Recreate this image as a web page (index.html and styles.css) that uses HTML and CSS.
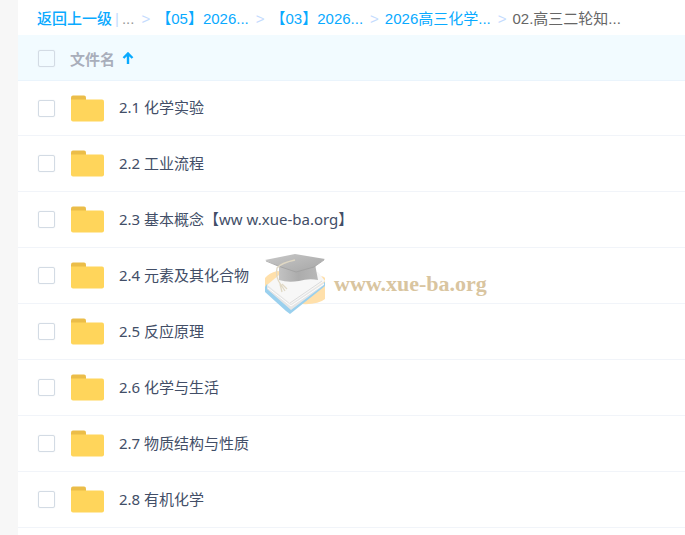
FILE: index.html
```html
<!DOCTYPE html>
<html lang="zh-CN">
<head>
<meta charset="utf-8">
<title>02.高三二轮知...</title>
<link rel="stylesheet" href="styles.css">
</head>
<body>
<svg class="defs" aria-hidden="true">
  <symbol id="folder" viewBox="0 0 33 27">
    <path d="M0 9V2.500Q0 .5 2 .5H13Q15 .5 15 2.500V9Z" fill="#ebbd49"/>
    <path d="M0 4.500H31Q33 4.500 33 6.500V24.500Q33 26.500 31 26.500H2Q0 26.500 0 24.500Z" fill="#ffd55b"/>
  </symbol>
</svg>
<main class="panel">
  <nav class="crumbs">
    <a class="back" href="#">返回上一级</a><span class="bar">|</span><span class="dots">...</span>
    <span class="sep">&gt;</span><a href="#">【05】2026...</a>
    <span class="sep">&gt;</span><a href="#">【03】2026...</a>
    <span class="sep">&gt;</span><a href="#">2026高三化学...</a>
    <span class="sep">&gt;</span><span class="current">02.高三二轮知...</span>
  </nav>
  <table class="files">
    <colgroup><col class="pick-col"><col class="icon-col"><col></colgroup>
    <thead>
      <tr>
        <th class="pick"><input type="checkbox" id="all" aria-labelledby="name-head"></th>
        <th class="name" colspan="2"><label for="all" id="name-head">文件名</label><svg class="sort" viewBox="0 0 12 12" aria-hidden="true"><path d="M6 12V2M1.500 6L6 1.500L10.500 6" fill="none" stroke="#09aaff" stroke-width="2.400"/></svg></th>
      </tr>
    </thead>
    <tbody>
      <tr><td class="pick"><input type="checkbox" id="f1"></td><td class="icon"><svg class="folder"><use href="#folder"/></svg></td><td class="title"><label for="f1">2.1 化学实验</label></td></tr>
      <tr><td class="pick"><input type="checkbox" id="f2"></td><td class="icon"><svg class="folder"><use href="#folder"/></svg></td><td class="title"><label for="f2">2.2 工业流程</label></td></tr>
      <tr><td class="pick"><input type="checkbox" id="f3"></td><td class="icon"><svg class="folder"><use href="#folder"/></svg></td><td class="title"><label for="f3">2.3 基本概念【ww w.xue-ba.org】</label></td></tr>
      <tr><td class="pick"><input type="checkbox" id="f4"></td><td class="icon"><svg class="folder"><use href="#folder"/></svg></td><td class="title"><label for="f4">2.4 元素及其化合物</label></td></tr>
      <tr><td class="pick"><input type="checkbox" id="f5"></td><td class="icon"><svg class="folder"><use href="#folder"/></svg></td><td class="title"><label for="f5">2.5 反应原理</label></td></tr>
      <tr><td class="pick"><input type="checkbox" id="f6"></td><td class="icon"><svg class="folder"><use href="#folder"/></svg></td><td class="title"><label for="f6">2.6 化学与生活</label></td></tr>
      <tr><td class="pick"><input type="checkbox" id="f7"></td><td class="icon"><svg class="folder"><use href="#folder"/></svg></td><td class="title"><label for="f7">2.7 物质结构与性质</label></td></tr>
      <tr><td class="pick"><input type="checkbox" id="f8"></td><td class="icon"><svg class="folder"><use href="#folder"/></svg></td><td class="title"><label for="f8">2.8 有机化学</label></td></tr>
    </tbody>
  </table>
  <div class="watermark">
    <svg class="cap" viewBox="0 0 60 60" aria-hidden="true">
      <defs>
        <linearGradient id="board" x1="0" y1="0" x2="1" y2="1"><stop offset="0" stop-color="#c8c8c8"/><stop offset="1" stop-color="#a6a6a6"/></linearGradient>
        <linearGradient id="crown" x1="0" y1="0" x2="1" y2="0"><stop offset="0" stop-color="#c2c2c2"/><stop offset=".5" stop-color="#acacac"/><stop offset="1" stop-color="#b8b8b8"/></linearGradient>
      </defs>
      <path d="M0 24Q4 19 12 17L54 22Q59 22 60 24V45Q53 51 36 50L3 38L0 36Z" fill="#ffe0ab"/>
      <path d="M0 33L2 30L25 52L60 28V32L25 60L21 57L0 38Z" fill="#9ad0ee"/>
      <path d="M2 31L26 48L59 28L59 31L26 56L2 35Z" fill="#e6e6e6"/>
      <path d="M3 34L26 52L59 30" fill="none" stroke="#fff" stroke-width="1"/>
      <path d="M2 31L14 21L53 18L60 27L26 50Z" fill="#f7f7f7"/>
      <path d="M25 49L57 27" stroke="#dcdcdc" stroke-width="1"/>
      <path d="M14 12L50 10L53 26Q44 24 34 27Q23 29 14 26Z" fill="url(#crown)"/>
      <path d="M0 6L30 0L60 5L49 13L31 18L13 12Z" fill="url(#board)"/>
      <path d="M1 7L13 12L31 18L49 13L59 6" fill="none" stroke="#a0a0a0" stroke-width=".8"/>
      <path d="M30 6Q16 9 12 14Q10 23 16 31L20 37M15 30L17 38M17 30L22 35" fill="none" stroke="#e0d8c4" stroke-width="1.300"/>
    </svg>
    <span>www.xue-ba.org</span>
  </div>
</main>
</body>
</html>
```
FILE: styles.css
```css
* { box-sizing: border-box; }
body {
  margin: 0;
  padding-left: 18px;
  min-height: 100vh;
  background: #f7f7f7;
  color: #424e67;
  font: 15px/20px "Noto Sans", "Noto Sans CJK SC", sans-serif;
  text-spacing-trim: space-all;
  overflow: hidden;
}
.defs { display: block; width: 0; height: 0; }
.panel {
  position: relative;
  min-height: 100vh;
  background: #fff;
}
.crumbs {
  display: flex;
  align-items: center;
  height: 35px;
  padding: 2px 0 0 19px;
  font-family: "Liberation Sans", "Noto Sans CJK SC", sans-serif;
  white-space: nowrap;
}
.crumbs a { color: #09aaff; text-decoration: none; }
.crumbs .back { font-weight: 500; }
.bar { margin: 0 3px; color: #c4dbfe; }
.dots { color: #999; }
.sep { margin: 0 6px 0 7px; color: #c4dbfe; }
.current { color: #666; }
.files {
  width: 100%;
  border-collapse: separate;
  border-spacing: 0;
  table-layout: fixed;
}
th, td {
  padding: 0;
  text-align: left;
  border-bottom: 1px solid #f1f4f9;
}
th {
  height: 46px;
  background: #f2fbff;
  border-color: #eaf4fc;
  color: #a9aebb;
  font-weight: 700;
}
td { height: 56px; }
tbody tr:first-child td { height: 55px; }
.pick-col { width: 52px; }
.icon-col { width: 49px; }
.pick { padding-left: 20px; }
th.pick { padding-top: 2px; }
.icon { padding-left: 1px; }
.title { padding-bottom: 2px; }
.name label, .sort { vertical-align: middle; }
.sort { width: 12px; height: 12px; margin-left: 7px; }
.folder {
  display: block;
  width: 33px;
  height: 27px;
}
input {
  appearance: none;
  display: block;
  width: 17px;
  height: 17px;
  margin: 0;
  border: 1px solid #d3dbe4;
  border-radius: 2px;
  box-shadow: 0 0 1px #d3dbe4;
}
.watermark {
  position: absolute;
  left: 247px;
  top: 254px;
  display: flex;
  align-items: center;
  gap: 9px;
  color: #d9c5a0;
  font: 700 22px/24px "Liberation Serif", serif;
  pointer-events: none;
}
.cap { width: 60px; height: 60px; }
```
